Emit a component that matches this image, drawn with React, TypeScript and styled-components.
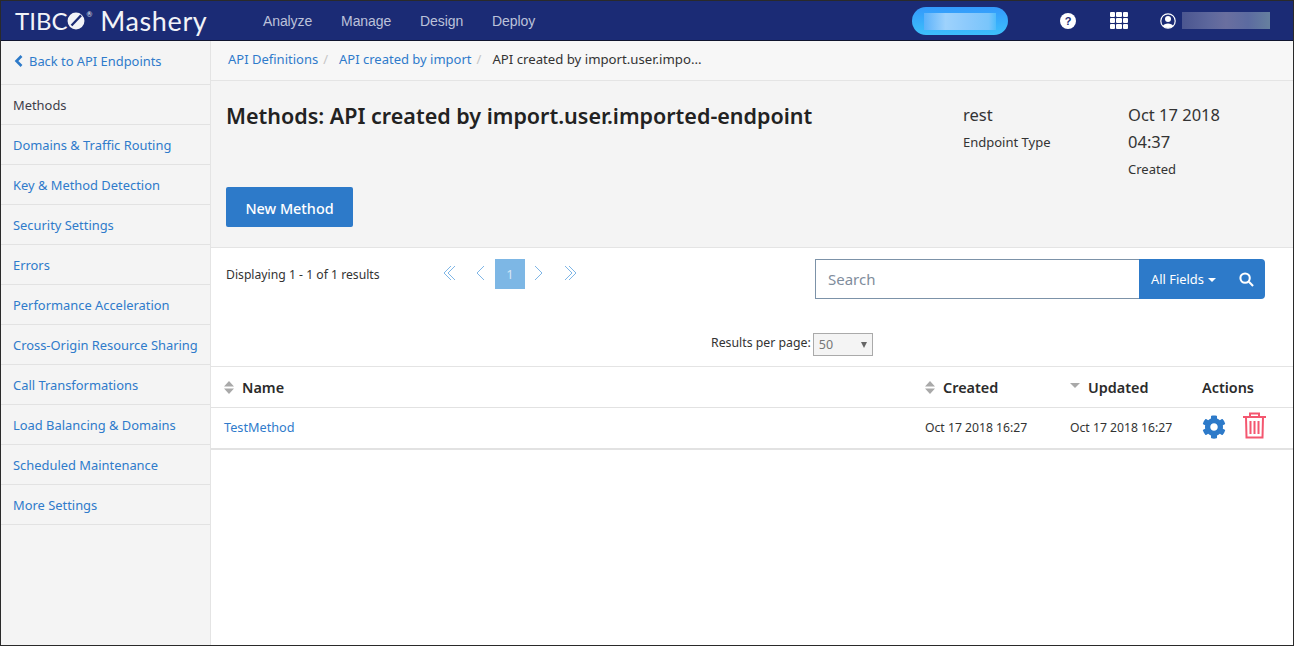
import styled, { createGlobalStyle } from 'styled-components';
import { FaCog } from 'react-icons/fa';

const GlobalStyle = createGlobalStyle`
  html, body {
    margin: 0;
    padding: 0;
    background: #fff;
  }
  * {
    box-sizing: border-box;
  }
`;

const Page = styled.div`
  width: 1294px;
  height: 646px;
  display: flex;
  flex-direction: column;
  border: 1px solid #2a2a2a;
  overflow: hidden;
  font-family: 'Noto Sans', 'Open Sans', sans-serif;
  font-size: 12.9px;
  color: #333;
  background: #fff;
`;

const Header = styled.header`
  height: 40px;
  flex: none;
  display: flex;
  align-items: center;
  background: #1b2b75;
  border-bottom: 1px solid #10152f;
  padding-left: 14px;
`;

const Logo = styled.div`
  width: 247px;
  flex: none;
  display: flex;
  align-items: center;
  color: #f2f3f8;
  font-family: 'Lato', sans-serif;
  font-weight: 400;
  font-size: 27px;
  letter-spacing: 0.6px;
  line-height: 1;
`;

const LogoBrand = styled.span`
  font-size: 24px;
  letter-spacing: 0;
`;

const LogoMark = styled.svg`
  width: 18px;
  height: 18px;
  flex: none;
`;

const LogoReg = styled.sup`
  font-size: 7px;
  letter-spacing: 0;
  margin: -12px 8px 0 1px;
`;

const Nav = styled.nav`
  width: 649px;
  flex: none;
  display: flex;
  gap: 29px;
  margin-left: 1px;
  font-family: 'Liberation Sans', Arial, sans-serif;
  font-size: 14px;
  letter-spacing: -0.1px;
  color: #bcc2da;
`;

const Pill = styled.div`
  width: 96px;
  height: 28px;
  flex: none;
  margin-top: 1px;
  border-radius: 14px;
  background: linear-gradient(#3399fb, #3dc0fb);
  display: flex;
  align-items: center;
  justify-content: center;
`;

const Blur = styled.div<{ $width: number; $colors: string }>`
  width: ${({ $width }) => $width}px;
  height: 17px;
  background: linear-gradient(90deg, ${({ $colors }) => $colors});
`;

const HeaderIcons = styled.div`
  display: flex;
  align-items: center;
  margin-left: 52px;
`;

const HelpIcon = styled.div`
  width: 16px;
  height: 16px;
  border-radius: 50%;
  background: #fff;
  color: #1b2b75;
  font-family: 'Liberation Sans', Arial, sans-serif;
  font-weight: 700;
  font-size: 11px;
  line-height: 16px;
  text-align: center;
`;

const Apps = styled.div`
  width: 18px;
  height: 17px;
  margin-left: 34px;
  display: grid;
  grid-template-columns: repeat(3, 1fr);
  gap: 1px;
`;

const AppsCell = styled.span`
  background: #fff;
  border-radius: 1px;
`;

const UserIcon = styled.svg`
  width: 16px;
  height: 16px;
  margin-left: 32px;
  margin-right: 6px;
`;

const Body = styled.div`
  flex: 1;
  min-height: 0;
  display: flex;
`;

const Sidebar = styled.aside`
  width: 210px;
  flex: none;
  background: #f4f4f4;
  border-right: 1px solid #e4e4e4;
`;

const SideBack = styled.a`
  height: 44px;
  display: flex;
  align-items: center;
  gap: 5px;
  padding: 0 0 3px 13px;
  border-bottom: 1px solid #e2e2e2;
  color: #2f7bcb;
`;

const SideItem = styled.a<{ $active?: boolean }>`
  height: 40px;
  display: flex;
  align-items: center;
  padding-left: 12px;
  border-bottom: 1px solid #e2e2e2;
  white-space: nowrap;
  color: ${({ $active }) => ($active ? '#3d3d4a' : '#2f7bcb')};
`;

const Main = styled.main`
  flex: 1;
  min-width: 0;
  display: flex;
  flex-direction: column;
`;

const Breadcrumbs = styled.div`
  height: 40px;
  flex: none;
  display: flex;
  align-items: center;
  padding: 0 0 3px 17px;
  background: #f7f7f7;
  border-bottom: 1px solid #e4e4e4;
  white-space: nowrap;
  font-size: 13px;
`;

const Crumb = styled.a`
  color: #2f7bcb;
`;

const CrumbSep = styled.span`
  color: #c6c6c6;
  margin: 0 11px 0 5px;
`;

const CrumbCurrent = styled.span`
  font-size: 13.2px;
`;

const Hero = styled.section`
  height: 167px;
  flex: none;
  display: flex;
  flex-direction: column;
  justify-content: space-between;
  padding: 19px 0 20px 15px;
  background: #f4f4f4;
  border-bottom: 1px solid #e4e4e4;
`;

const HeroTop = styled.div`
  display: flex;
`;

const Title = styled.h1`
  width: 737px;
  flex: none;
  margin: 0;
  padding-top: 1px;
  font-size: 21.5px;
  line-height: 30px;
  font-weight: 600;
  color: #222;
  white-space: nowrap;
`;

const Meta = styled.div<{ $width: number }>`
  width: ${({ $width }) => $width}px;
  flex: none;
  display: flex;
  flex-direction: column;
  padding-top: 1px;
`;

const MetaValue = styled.div`
  font-size: 16.5px;
  line-height: 27px;
`;

const MetaLabel = styled.div`
  padding-top: 1px;
  font-size: 13px;
  line-height: 27px;
`;

const NewButton = styled.button`
  width: 127px;
  height: 40px;
  padding: 2px 0 0;
  border: 0;
  border-radius: 2px;
  background: #2d7ac9;
  color: #fff;
  font: inherit;
  font-size: 14.4px;
  font-weight: 500;
`;

const Toolbar = styled.div`
  height: 119px;
  flex: none;
  display: grid;
  grid-template-columns: 209px 380px 450px;
  grid-template-rows: 52px 1fr;
  padding: 11px 0 0 15px;
  border-bottom: 1px solid #e4e4e4;
`;

const Displaying = styled.div`
  padding-top: 1px;
  font-size: 12.2px;
  line-height: 30px;
`;

const Pager = styled.div`
  display: flex;
  align-items: flex-start;
  height: 30px;
`;

const PagerArrow = styled.svg`
  width: 30px;
  height: 28px;
  flex: none;
  fill: none;
  stroke: #7fb6e6;
  stroke-width: 1;
`;

const PagerCurrent = styled.div`
  width: 30px;
  height: 30px;
  flex: none;
  background: #7db7e5;
  color: #d5e6f5;
  font-size: 13px;
  line-height: 30px;
  text-align: center;
`;

const SearchGroup = styled.div`
  display: flex;
  height: 40px;
`;

const SearchInput = styled.div`
  flex: 1;
  border: 1px solid #7c92a8;
  border-right: 0;
  padding-left: 12px;
  font-size: 15px;
  line-height: 38px;
  color: #7f8d9c;
  background: #fff;
`;

const SearchActions = styled.div`
  width: 126px;
  flex: none;
  display: flex;
  align-items: center;
  background: #2d7ac9;
  border-radius: 0 4px 4px 0;
  color: #fff;
  padding-left: 12px;
`;

const Caret = styled.span`
  width: 0;
  height: 0;
  margin: 2px 0 0 4px;
  border-left: 4px solid transparent;
  border-right: 4px solid transparent;
  border-top: 4px solid #fff;
`;

const SearchIcon = styled.svg`
  width: 15px;
  height: 15px;
  margin-left: 23px;
  fill: none;
  stroke: #fff;
  stroke-width: 2.2;
`;

const PerPage = styled.div`
  grid-column: 1 / -1;
  display: flex;
  align-items: flex-start;
  padding: 22px 0 0 485px;
  gap: 2px;
`;

const PerPageLabel = styled.span`
  font-size: 12.3px;
  line-height: 20px;
`;

const PerPageSelect = styled.div`
  width: 60px;
  height: 23px;
  border: 1px solid #aaa;
  background: #f4f4f4;
  color: #777;
  font-size: 12.5px;
  line-height: 22px;
  padding: 0 5px;
  display: flex;
  justify-content: space-between;
  align-items: center;
`;

const PerPageCaret = styled.span`
  width: 0;
  height: 0;
  border-left: 3px solid transparent;
  border-right: 3px solid transparent;
  border-top: 6px solid #666;
`;

const Row = styled.div<{ $head?: boolean }>`
  flex: none;
  display: grid;
  grid-template-columns: 701px 145px 132px 1fr;
  align-items: center;
  height: ${({ $head }) => ($head ? '41px' : '42px')};
  padding: 0 0 ${({ $head }) => ($head ? '0' : '2px')} 13px;
  border-bottom: ${({ $head }) => ($head ? '1px' : '2px')} solid #e2e2e2;
`;

const HeadCell = styled.div`
  display: flex;
  align-items: center;
  gap: 8px;
  font-size: 14.4px;
  font-weight: 600;
  color: #2b2b2b;
`;

const SortIcon = styled.svg`
  width: 10px;
  height: 13px;
  fill: #a9a9a9;
`;

const Cell = styled.div`
  font-size: 12.2px;
  color: #333;
`;

const RowLink = styled.a`
  font-size: 12.7px;
  color: #2f7bcb;
`;

const Actions = styled.div`
  display: flex;
  align-items: center;
  gap: 17px;
  color: #2d7ac9;
`;

const TrashIcon = styled.svg`
  width: 23px;
  height: 27px;
  margin-bottom: 3px;
  fill: none;
  stroke: #f4566f;
  stroke-width: 2;
`;

const BackChevron = () => (
  <svg width="10" height="12" viewBox="0 0 10 12">
    <path d="M7.5 1 L2.5 6 L7.5 11" fill="none" stroke="#2d7ac9" strokeWidth="2.6" />
  </svg>
);

const sideItems = [
  'Domains & Traffic Routing',
  'Key & Method Detection',
  'Security Settings',
  'Errors',
  'Performance Acceleration',
  'Cross-Origin Resource Sharing',
  'Call Transformations',
  'Load Balancing & Domains',
  'Scheduled Maintenance',
  'More Settings',
];

export default function App() {
  return (
    <Page>
      <GlobalStyle />
      <Header>
        <Logo>
          <LogoBrand>TIBC</LogoBrand>
          <LogoMark viewBox="0 0 16 16">
            <circle cx="8" cy="8" r="7.5" fill="#f2f3f8" />
            <path d="M4 12 L12.5 3" stroke="#1b2b75" strokeWidth="2" />
          </LogoMark>
          <LogoReg>®</LogoReg>
          Mashery
        </Logo>
        <Nav>
          <span>Analyze</span>
          <span>Manage</span>
          <span>Design</span>
          <span>Deploy</span>
        </Nav>
        <Pill>
          <Blur $width={72} $colors="#5bb2fb, #9ed2fc 30%, #8ccafc 60%, #79c5fb 90%, #4fbcfb" />
        </Pill>
        <HeaderIcons>
          <HelpIcon>?</HelpIcon>
          <Apps>
            {Array.from({ length: 9 }, (_, i) => (
              <AppsCell key={i} />
            ))}
          </Apps>
          <UserIcon viewBox="0 0 16 16">
            <circle cx="8" cy="8" r="7.2" fill="none" stroke="#fff" strokeWidth="1.2" />
            <circle cx="8" cy="6" r="3" fill="#fff" />
            <path d="M2.8 13 C4 9.6 12 9.6 13.2 13 C11 15.6 5 15.6 2.8 13 Z" fill="#fff" />
          </UserIcon>
          <Blur $width={88} $colors="#4b5690, #5d679c 30%, #6a6f9f 50%, #5c6ba0 75%, #66809f" />
        </HeaderIcons>
      </Header>
      <Body>
        <Sidebar>
          <SideBack>
            <BackChevron />
            Back to API Endpoints
          </SideBack>
          <SideItem $active>Methods</SideItem>
          {sideItems.map((item) => (
            <SideItem key={item}>{item}</SideItem>
          ))}
        </Sidebar>
        <Main>
          <Breadcrumbs>
            <Crumb>API Definitions</Crumb>
            <CrumbSep>/</CrumbSep>
            <Crumb>API created by import</Crumb>
            <CrumbSep>/</CrumbSep>
            <CrumbCurrent>API created by import.user.impo...</CrumbCurrent>
          </Breadcrumbs>
          <Hero>
            <HeroTop>
              <Title>Methods: API created by import.user.imported-endpoint</Title>
              <Meta $width={165}>
                <MetaValue>rest</MetaValue>
                <MetaLabel>Endpoint Type</MetaLabel>
              </Meta>
              <Meta $width={150}>
                <MetaValue>Oct 17 2018</MetaValue>
                <MetaValue>04:37</MetaValue>
                <MetaLabel>Created</MetaLabel>
              </Meta>
            </HeroTop>
            <NewButton>New Method</NewButton>
          </Hero>
          <Toolbar>
            <Displaying>Displaying 1 - 1 of 1 results</Displaying>
            <Pager>
              <PagerArrow viewBox="0 0 30 28">
                <path d="M16 7 L9 14 L16 21" />
                <path d="M20 7 L13 14 L20 21" />
              </PagerArrow>
              <PagerArrow viewBox="0 0 30 28">
                <path d="M19 7 L12 14 L19 21" />
              </PagerArrow>
              <PagerCurrent>1</PagerCurrent>
              <PagerArrow viewBox="0 0 30 28">
                <path d="M10 7 L17 14 L10 21" />
              </PagerArrow>
              <PagerArrow viewBox="0 0 30 28">
                <path d="M10 7 L17 14 L10 21" />
                <path d="M14 7 L21 14 L14 21" />
              </PagerArrow>
            </Pager>
            <SearchGroup>
              <SearchInput>Search</SearchInput>
              <SearchActions>
                All Fields
                <Caret />
                <SearchIcon viewBox="0 0 16 16">
                  <circle cx="6.5" cy="6.5" r="5" />
                  <path d="M10.5 10.5 L15 15" />
                </SearchIcon>
              </SearchActions>
            </SearchGroup>
            <PerPage>
              <PerPageLabel>Results per page:</PerPageLabel>
              <PerPageSelect>
                50
                <PerPageCaret />
              </PerPageSelect>
            </PerPage>
          </Toolbar>
          <Row $head>
            <HeadCell>
              <SortIcon viewBox="0 0 10 13">
                <path d="M5 0 L10 5.5 L0 5.5 Z M0 7.5 L10 7.5 L5 13 Z" />
              </SortIcon>
              Name
            </HeadCell>
            <HeadCell>
              <SortIcon viewBox="0 0 10 13">
                <path d="M5 0 L10 5.5 L0 5.5 Z M0 7.5 L10 7.5 L5 13 Z" />
              </SortIcon>
              Created
            </HeadCell>
            <HeadCell>
              <SortIcon viewBox="0 0 10 13">
                <path d="M0 2 L10 2 L5 7 Z" />
              </SortIcon>
              Updated
            </HeadCell>
            <HeadCell>Actions</HeadCell>
          </Row>
          <Row>
            <Cell>
              <RowLink>TestMethod</RowLink>
            </Cell>
            <Cell>Oct 17 2018 16:27</Cell>
            <Cell>Oct 17 2018 16:27</Cell>
            <Actions>
              <FaCog size={24} />
              <TrashIcon viewBox="0 0 23 27">
                <path d="M0 5 H23 M7 5 V1.5 H16 V5 M3 5 L3.5 25.5 H19.5 L20 5 M7.5 9 V22 M11.5 9 V22 M15.5 9 V22" />
              </TrashIcon>
            </Actions>
          </Row>
        </Main>
      </Body>
    </Page>
  );
}
